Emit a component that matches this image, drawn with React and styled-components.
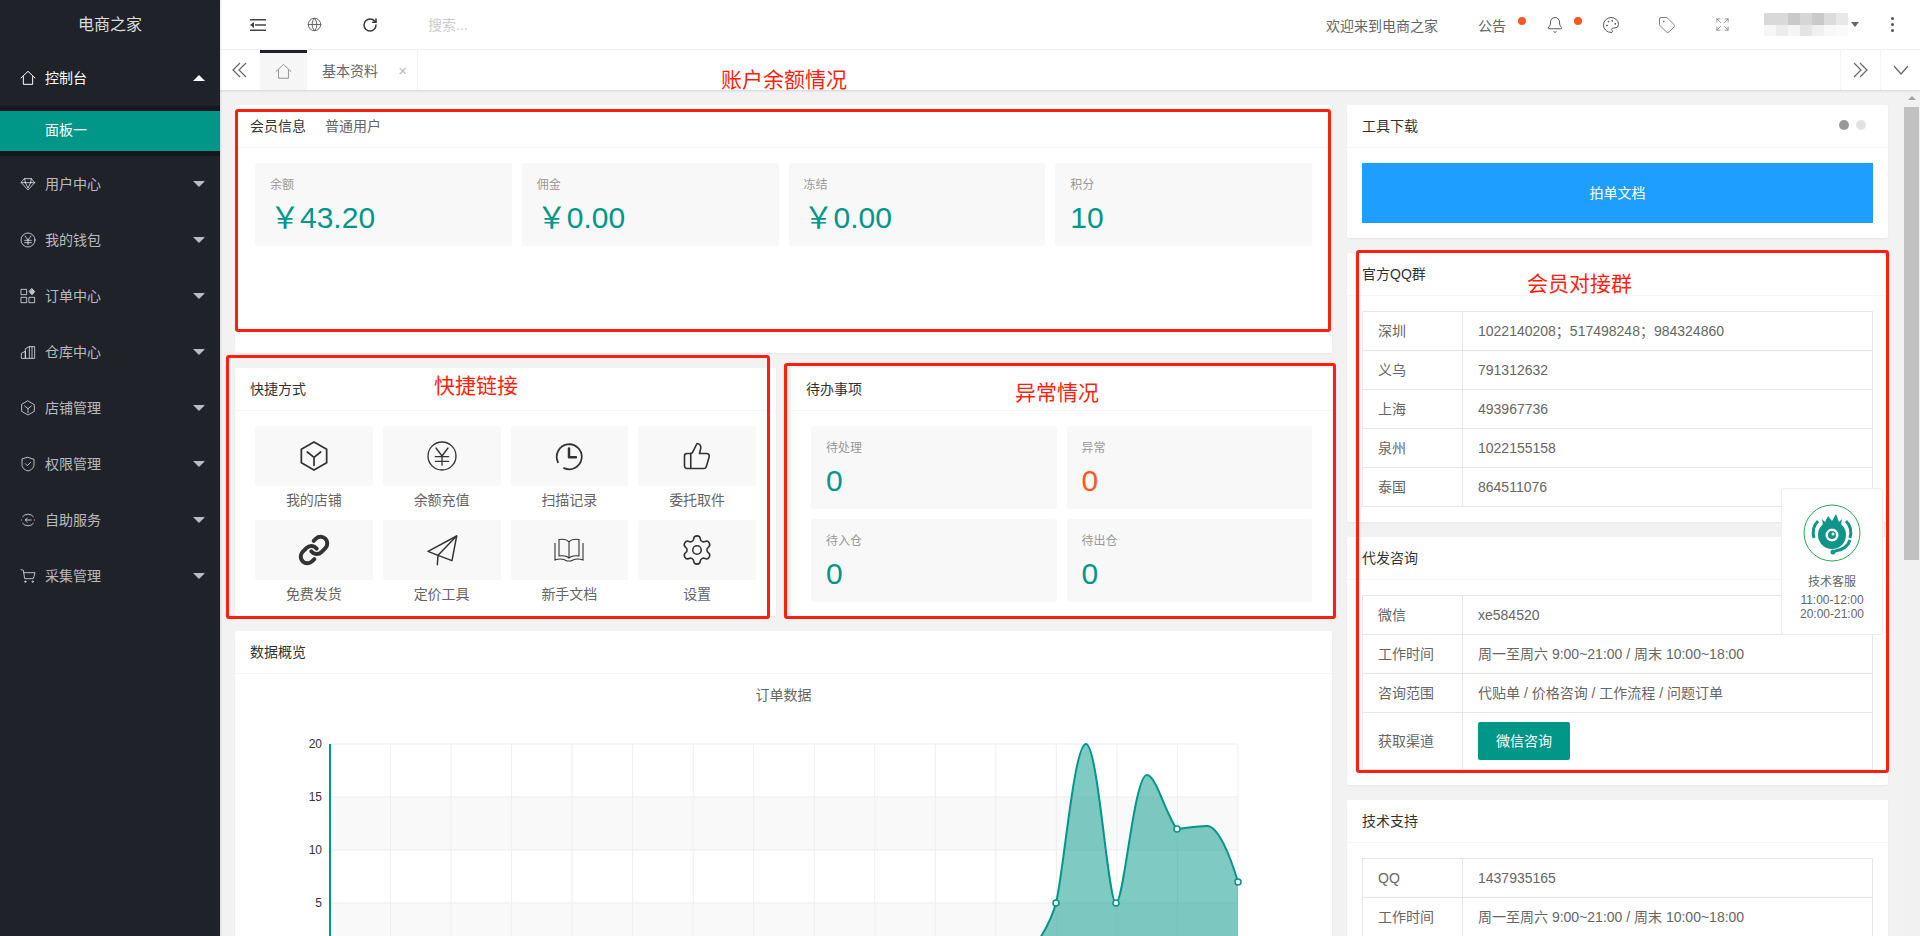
import React from 'react'
import styled, { createGlobalStyle } from 'styled-components'
import { Bell, Palette, Tag, Expand, Globe, RotateCw, ThumbsUp, Settings, Link as LinkIcon } from 'lucide-react'

const GlobalStyle = createGlobalStyle`
  * { box-sizing: border-box; }
  html, body { margin: 0; height: 100%; overflow: hidden; background: #f2f2f2; }
  body {
    font-family: "Liberation Sans", "Noto Sans CJK SC", sans-serif;
    font-size: 14px;
    color: #666;
  }
`

const Page = styled.div`
  position: relative;
  display: flex;
  width: 100%;
  height: 100vh;
  overflow: hidden;
`

const Sidebar = styled.aside`
  flex: 0 0 220px;
  background: #20222a;
  box-shadow: 1px 0 2px rgba(0, 0, 0, 0.1);
  z-index: 2;
`

const Logo = styled.div`
  height: 50px;
  line-height: 50px;
  text-align: center;
  font-size: 16px;
  color: rgba(255, 255, 255, 0.85);
`

const MenuItem = styled.div`
  display: flex;
  align-items: center;
  height: 56px;
  padding: 0 15px 0 20px;
  color: ${props => props.$active ? '#fff' : 'rgba(255, 255, 255, 0.7)'};

  & > span { margin-left: 9px; padding-bottom: 2px; flex: 1; }
`

const Caret = styled.i`
  width: 0;
  height: 0;
  border-left: 6px solid transparent;
  border-right: 6px solid transparent;
  border-top: ${props => props.$up ? '0' : '6px solid rgba(255, 255, 255, 0.7)'};
  border-bottom: ${props => props.$up ? '6px solid #fff' : '0'};
`

const SubMenu = styled.div`
  background: rgba(0, 0, 0, 0.3);
  padding: 5px 0;
`

const SubItem = styled.div`
  height: 40px;
  line-height: 38px;
  padding-left: 45px;
  color: #fff;
  background: #009688;
`

const Main = styled.div`
  flex: 1;
  min-width: 0;
  display: flex;
  flex-direction: column;
`

const TopBar = styled.header`
  display: flex;
  align-items: center;
  height: 50px;
  padding-left: 10px;
  background: #fff;
  border-bottom: 1px solid #f4f4f4;
`

const TopIcon = styled.div`
  position: relative;
  display: flex;
  align-items: center;
  justify-content: ${props => props.$left ? 'flex-start' : 'center'};
  width: ${props => props.$w || 56}px;
  height: 100%;
  flex: none;
  color: ${props => props.$color || '#555'};
`

const Search = styled.input`
  margin-left: 30px;
  width: 200px;
  border: 0;
  outline: 0;
  padding: 0;
  font: inherit;
  background: transparent;

  &::placeholder { color: #ccc; opacity: 1; }
`

const Spacer = styled.div`
  flex: 1;
`

const Dot = styled.i`
  position: absolute;
  top: 17px;
  left: ${props => props.$left}px;
  width: 8px;
  height: 8px;
  border-radius: 50%;
  background: #ff5722;
`

const Mosaic = styled.div`
  display: grid;
  grid-template-columns: repeat(7, 12px);
  grid-auto-rows: 11.5px;
  margin-left: 14px;
  width: 84px;
`

const MosaicCell = styled.i`
  background: ${props => props.$c};
`

const UserCaret = styled.i`
  width: 0;
  height: 0;
  margin: 0 5px 0 3px;
  border-left: 4px solid transparent;
  border-right: 4px solid transparent;
  border-top: 5px solid #666;
`

const MoreDots = styled.div`
  display: flex;
  flex-direction: column;
  gap: 3px;

  & > i { width: 3px; height: 3px; background: #555; border-radius: 50%; }
`

const TabBar = styled.div`
  position: relative;
  display: flex;
  height: 40px;
  background: #fff;
  box-shadow: 0 1px 2px rgba(0, 0, 0, 0.12);
  z-index: 1;
`

const TabArrow = styled.div`
  display: flex;
  align-items: center;
  justify-content: center;
  width: 40px;
  color: #666;
  border-left: ${props => props.$line ? '1px solid #f4f4f4' : '0'};
`

const HomeTab = styled.div`
  display: flex;
  align-items: center;
  justify-content: center;
  width: 47px;
  background: #f6f6f6;
  border-top: 3px solid #20222a;
  color: #777;
`

const Tab = styled.div`
  display: flex;
  align-items: center;
  justify-content: space-between;
  width: 111px;
  padding: 0 10px 0 15px;
  border-right: 1px solid #f4f4f4;
  color: #666;

  & > em { font-style: normal; font-size: 15px; color: #bbb; }
`

const BodyRow = styled.div`
  flex: 1;
  min-height: 0;
  display: flex;
`

const Content = styled.main`
  flex: 1;
  min-width: 0;
  overflow: hidden;
  padding: 15px;
`

const Rail = styled.div`
  flex: 0 0 17px;
  background: #f1f1f1;
  padding-top: 6px;
`

const RailArrow = styled.i`
  display: block;
  width: 0;
  height: 0;
  margin: 0 auto 7px;
  border-left: 4px solid transparent;
  border-right: 4px solid transparent;
  border-bottom: 4px solid #a3a3a3;
`

const RailThumb = styled.div`
  height: 453px;
  margin: 0 1px;
  background: #c1c1c1;
`

const Columns = styled.div`
  display: grid;
  grid-template-columns: 1097px 541px;
  gap: 15px;
  align-items: start;
`

const Stack = styled.div`
  display: flex;
  flex-direction: column;
  gap: 15px;
`

const HalfRow = styled.div`
  display: grid;
  grid-template-columns: 1fr 1fr;
  gap: 15px;
`

const Card = styled.section`
  background: #fff;
  border-radius: 2px;
  box-shadow: 0 1px 2px rgba(0, 0, 0, 0.05);
  height: ${props => props.$h ? props.$h + 'px' : 'auto'};
`

const CardHead = styled.div`
  display: flex;
  align-items: center;
  height: 43px;
  padding: 0 15px 2px;
  border-bottom: 1px solid #f6f6f6;
  color: #333;

  & > small { font-size: 14px; color: #666; margin-left: 19px; }
`

const CardBody = styled.div`
  padding: 15px ${props => props.$px || 15}px;
`

const Grid = styled.div`
  display: grid;
  grid-template-columns: repeat(${props => props.$cols}, 1fr);
  gap: 10px;
`

const Tile = styled.div`
  height: 83px;
  padding: 13px 15px 0;
  background: #f8f8f8;
  border-radius: 2px;
`

const TileLabel = styled.div`
  font-size: 12px;
  line-height: 18px;
  color: #999;
`

const TileValue = styled.div`
  margin-top: 6px;
  font-size: 30px;
  line-height: 36px;
  color: ${props => props.$warn ? '#ff5722' : '#009688'};
`

const Shortcut = styled.div`
  height: 84px;
  text-align: center;
  color: #666;
  line-height: 28px;
`

const ShortcutIcon = styled.div`
  display: flex;
  align-items: center;
  justify-content: center;
  height: 60px;
  background: #f8f8f8;
  border-radius: 2px;
  color: #333;
`

const CarouselDots = styled.div`
  display: flex;
  gap: 7px;
  margin-left: auto;
  margin-right: 7px;

  & > i { width: 10px; height: 10px; border-radius: 50%; background: #e2e2e2; }
  & > i:first-child { background: #999; }
`

const BlueButton = styled.div`
  height: 60px;
  line-height: 60px;
  text-align: center;
  color: #fff;
  background: #1e9fff;
`

const Table = styled.table`
  width: 100%;
  border-collapse: collapse;
  color: #666;

  & td {
    padding: 9px 15px;
    line-height: 20px;
    border: 1px solid #e6e6e6;
  }
  & td:first-child { width: 100px; }
`

const GreenButton = styled.div`
  display: block;
  width: 92px;
  height: 38px;
  line-height: 38px;
  text-align: center;
  border-radius: 2px;
  color: #fff;
  background: #009688;
`

const ChartTitle = styled.div`
  height: 42px;
  line-height: 42px;
  text-align: center;
  color: #666;
`

const ChartSvg = styled.svg`
  display: block;
  width: 1097px;
  height: 300px;

  & text { font-size: 12px; fill: #333; text-anchor: end; }
`

const Helper = styled.div`
  position: absolute;
  left: 1781px;
  top: 488px;
  width: 102px;
  height: 147px;
  padding-top: 15px;
  text-align: center;
  font-size: 12px;
  line-height: 14px;
  color: #666;
  background: #fff;
  border: 1px solid #eee;
  border-radius: 3px;
  z-index: 3;

  & > svg { display: block; margin: 0 auto 13px; }
  & > div { margin-bottom: 4px; }
`

const Mark = styled.div`
  position: absolute;
  left: ${props => props.$x}px;
  top: ${props => props.$y}px;
  width: ${props => props.$w}px;
  height: ${props => props.$h}px;
  border: 3px solid #ff1f0f;
  border-radius: 3px;
  z-index: 4;
  pointer-events: none;
`

const Note = styled.div`
  position: absolute;
  left: ${props => props.$x}px;
  top: ${props => props.$y}px;
  font-size: 21px;
  line-height: 28px;
  color: #ff1f0f;
  white-space: nowrap;
  z-index: 5;
`

const Line = ({ size = 16, sw = 1.5, children }) => (
  <svg width={size} height={size} viewBox='0 0 24 24' fill='none' stroke='currentColor' strokeWidth={sw} strokeLinecap='round' strokeLinejoin='round'>
    {children}
  </svg>
)

const HomeIcon = props => <Line {...props}><path d='M1.5 12 12 2l10.5 10' /><path d='M5 10v11.5h14V10' /></Line>
const GemIcon = props => <Line {...props}><path d='M7 4h10l5 6-10 11L2 10z' /><path d='M2 10h20M8 10l4 8 4-8M7 4l1 6M17 4l-1 6' /></Line>
const YenIcon = props => <Line {...props}><circle cx='12' cy='12' r='10.5' /><path d='M7.5 6 12 12l4.5-6M7 12.5h10M7 16h10M12 12v7' /></Line>
const AppsIcon = props => <Line {...props}><path d='M2 2h8v8H2zM2 14h8v8H2zM14 14h8v8h-8z' /><path d='m18 1 4 4.5-4 4.5-4-4.5z' fill='currentColor' /></Line>
const StoreIcon = props => <Line {...props}><path d='M2 21v-7l6-3v10zM8 21V7l6-3h8v17zM14 4v17M18 4v17' /></Line>
const BoxIcon = props => <Line {...props}><path d='M12 1.5 21.5 7v10L12 22.5 2.5 17V7z' /><path d='M7 9l5 4 5-4M12 13v6' /></Line>
const ShieldIcon = props => <Line {...props}><path d='M12 2 21 5v8c0 5-4 8-9 9.5C7 21 3 18 3 13V5z' /><path d='m8 11.5 3 3 5-5' /></Line>
const ServiceIcon = props => <Line {...props}><path d='M20 7a10 10 0 0 0-16 0M4 17a10 10 0 0 0 16 0M2 12h.5M21.5 12h.5' /><path d='M17 12H8m3-3-3 3 3 3' /></Line>
const CartIcon = props => <Line {...props}><path d='M1.5 2.5 5 3.5 7 16h13l2.5-9H6' /><circle cx='8' cy='20.5' r='1' /><circle cx='19' cy='20.5' r='1' /></Line>
const ClockIcon = props => <Line {...props}><path d='M8 21.7A10 10 0 1 0 3.2 17' /><path d='M12 6v7h5.5' strokeWidth='2' /></Line>
const PlaneIcon = props => <Line {...props}><path d='M1.5 13 23 1.5 19.5 20 9 16z' /><path d='M23 1.5 9 16l-.5 7 .5-7z' /></Line>
const BookIcon = () => (
  <svg width='30' height='24' viewBox='0 0 30 24' fill='none' stroke='currentColor' strokeWidth='1.100'>
    <path d='M15 4C13 1.500 9 1 5 1.500V18c4-.5 8 0 10 2 2-2 6-2.500 10-2V1.500C21 1 17 1.500 15 4zM15 4v16' />
    <path d='M1 5v17c4-1.500 9-1 12 1h4c3-2 8-2.500 12-1V5' />
  </svg>
)
const ShrinkIcon = () => (
  <svg width='18' height='14' viewBox='0 0 18 14'><path d='M1 1h16v1.500H1zM1 11.500h16V13H1zM6 6.200h11v1.500H6zM1 7l4-3v6z' fill='#444' /></svg>
)
const Chevrons = ({ right }) => (
  <svg width='16' height='16' viewBox='0 0 16 16' fill='none' stroke='currentColor' strokeWidth='1.200'>
    <path d={right ? 'M1 1l7 7-7 7M7 1l7 7-7 7' : 'M8 1 1 8l7 7M14 1 7 8l7 7'} />
  </svg>
)
const ChevronDown = () => (
  <svg width='16' height='16' viewBox='0 0 16 16' fill='none' stroke='currentColor' strokeWidth='1.200'><path d='M1 4l7 8 7-8' /></svg>
)

const RobotLogo = () => (
  <svg width='58' height='58' viewBox='0 0 58 58'>
    <circle cx='29' cy='29' r='28' fill='#fff' stroke='#22a94f' strokeWidth='1' />
    <path d='M19 15l3 3 3-6 4 5 4-7 3 8 3-3-1 6H20z' fill='#0f9488' />
    <circle cx='29' cy='31' r='14' fill='#0f9488' />
    <circle cx='29' cy='31' r='6.500' fill='#fff' />
    <circle cx='29' cy='31' r='4' fill='#0f9488' />
    <circle cx='30' cy='30' r='1.500' fill='#fff' />
    <path d='M11 34c-2-7 0-13 4-17M47 34c2-7 0-13-4-17M47 36c-2 7-8 10-15 11' fill='none' stroke='#0f9488' strokeWidth='3' />
    <circle cx='30' cy='48' r='2.500' fill='#0f9488' />
  </svg>
)

const menu = [
  ['用户中心', GemIcon],
  ['我的钱包', YenIcon],
  ['订单中心', AppsIcon],
  ['仓库中心', StoreIcon],
  ['店铺管理', BoxIcon],
  ['权限管理', ShieldIcon],
  ['自助服务', ServiceIcon],
  ['采集管理', CartIcon]
]

const mosaic = [
  '#d9d9d9', '#d9d9d9', '#c9c9c9', '#d6d6d6', '#c9c9c9', '#dcdcdc', '#e8e8e8',
  '#f6f6f6', '#ececec', '#f4f4f4', '#e4e4e4', '#f0f0f0', '#f8f8f8', '#fafafa'
]

const balances = [['余额', '￥43.20'], ['佣金', '￥0.00'], ['冻结', '￥0.00'], ['积分', '10']]

const shortcuts = [
  ['我的店铺', <BoxIcon size={32} sw={1.300} />],
  ['余额充值', <YenIcon size={32} sw={1} />],
  ['扫描记录', <ClockIcon size={30} sw={1.400} />],
  ['委托取件', <ThumbsUp size={30} strokeWidth={1.300} />],
  ['免费发货', <LinkIcon size={32} strokeWidth={3} />],
  ['定价工具', <PlaneIcon size={32} sw={1.100} />],
  ['新手文档', <BookIcon />],
  ['设置', <Settings size={34} strokeWidth={1.100} />]
]

const todos = [['待处理', 0], ['异常', 0, true], ['待入仓', 0], ['待出仓', 0]]

const qqGroups = [
  ['深圳', '1022140208；517498248；984324860'],
  ['义乌', '791312632'],
  ['上海', '493967736'],
  ['泉州', '1022155158'],
  ['泰国', '864511076']
]

const xLines = Array.from({ length: 16 }, (_, i) => 330 + i * 60.53)
const yTicks = [[20, 744], [15, 797], [10, 850], [5, 903]]
const curve = 'C1036 946 1050 925 1056 903C1064 870 1074 744 1086 744C1098 744 1108 903 1116 903C1124 903 1134 775 1147 775C1156 775 1166 815 1177 829C1187 828 1197 826 1207 826C1218 826 1230 855 1238 882'
const dots = [[1056, 903], [1116, 903], [1177, 829], [1238, 882]]

const OrderChart = () => (
  <ChartSvg viewBox='235 716 1097 300'>
    <rect x='330' y='797' width='908' height='53' fill='#f9f9f9' />
    <rect x='330' y='903' width='908' height='53' fill='#f9f9f9' />
    {xLines.map(x => <line key={x} x1={x} x2={x} y1='744' y2='956' stroke='#eee' />)}
    {yTicks.map(([v, y]) => (
      <g key={v}>
        <line x1='330' x2='1238' y1={y} y2={y} stroke='#eee' />
        <text x='322' y={y + 4}>{v}</text>
      </g>
    ))}
    <path d={`M1026 956${curve}V956z`} fill='#009688' fillOpacity='0.5' />
    <path d={`M330 956H1026${curve}`} fill='none' stroke='#009688' strokeWidth='2' />
    <line x1='330' x2='330' y1='744' y2='956' stroke='#009688' strokeWidth='2' />
    {dots.map(([x, y]) => <circle key={x} cx={x} cy={y} r='3' fill='#fff' stroke='#009688' strokeWidth='1.500' />)}
  </ChartSvg>
)

const App = () => (
  <Page>
    <GlobalStyle />
    <Sidebar>
      <Logo>电商之家</Logo>
      <MenuItem $active>
        <HomeIcon size={16} sw={1.500} />
        <span>控制台</span>
        <Caret $up />
      </MenuItem>
      <SubMenu>
        <SubItem>面板一</SubItem>
      </SubMenu>
      {menu.map(([label, Icon]) => (
        <MenuItem key={label}>
          <Icon size={16} sw={1.500} />
          <span>{label}</span>
          <Caret />
        </MenuItem>
      ))}
    </Sidebar>

    <Main>
      <TopBar>
        <TopIcon><ShrinkIcon /></TopIcon>
        <TopIcon $color='#666'><Globe size={15} strokeWidth={1.600} /></TopIcon>
        <TopIcon $color='#333'><RotateCw size={16} strokeWidth={2.200} /></TopIcon>
        <Search placeholder='搜索...' />
        <Spacer />
        <TopIcon $w={152} $left $color='#666'>欢迎来到电商之家</TopIcon>
        <TopIcon $w={49} $left $color='#666'>公告<Dot $left={40} /></TopIcon>
        <TopIcon $color='#444'><Bell size={18} strokeWidth={1.200} /><Dot $left={47} /></TopIcon>
        <TopIcon $color='#555'><Palette size={18} strokeWidth={1.300} /></TopIcon>
        <TopIcon $w={55} $color='#666'><Tag size={18} strokeWidth={1.100} /></TopIcon>
        <TopIcon $color='#777'><Expand size={15} strokeWidth={1.200} /></TopIcon>
        <Mosaic>{mosaic.map((c, i) => <MosaicCell key={i} $c={c} />)}</Mosaic>
        <UserCaret />
        <TopIcon $left={false}><MoreDots><i /><i /><i /></MoreDots></TopIcon>
      </TopBar>

      <TabBar>
        <TabArrow><Chevrons /></TabArrow>
        <HomeTab><HomeIcon size={17} sw={1.100} /></HomeTab>
        <Tab>基本资料<em>×</em></Tab>
        <Spacer />
        <TabArrow $line><Chevrons right /></TabArrow>
        <TabArrow $line><ChevronDown /></TabArrow>
      </TabBar>

      <BodyRow>
        <Content>
          <Columns>
            <Stack>
              <Card $h={248}>
                <CardHead>会员信息<small>普通用户</small></CardHead>
                <CardBody $px={20}>
                  <Grid $cols={4}>
                    {balances.map(([label, value]) => (
                      <Tile key={label}>
                        <TileLabel>{label}</TileLabel>
                        <TileValue>{value}</TileValue>
                      </Tile>
                    ))}
                  </Grid>
                </CardBody>
              </Card>

              <HalfRow>
                <Card $h={248}>
                  <CardHead>快捷方式</CardHead>
                  <CardBody $px={20}>
                    <Grid $cols={4}>
                      {shortcuts.map(([label, icon]) => (
                        <Shortcut key={label}>
                          <ShortcutIcon>{icon}</ShortcutIcon>
                          {label}
                        </Shortcut>
                      ))}
                    </Grid>
                  </CardBody>
                </Card>
                <Card $h={248}>
                  <CardHead>待办事项</CardHead>
                  <CardBody $px={20}>
                    <Grid $cols={2}>
                      {todos.map(([label, value, warn]) => (
                        <Tile key={label}>
                          <TileLabel>{label}</TileLabel>
                          <TileValue $warn={warn}>{value}</TileValue>
                        </Tile>
                      ))}
                    </Grid>
                  </CardBody>
                </Card>
              </HalfRow>

              <Card>
                <CardHead>数据概览</CardHead>
                <ChartTitle>订单数据</ChartTitle>
                <OrderChart />
              </Card>
            </Stack>

            <Stack>
              <Card>
                <CardHead>工具下载<CarouselDots><i /><i /></CarouselDots></CardHead>
                <CardBody>
                  <BlueButton>拍单文档</BlueButton>
                </CardBody>
              </Card>

              <Card>
                <CardHead>官方QQ群</CardHead>
                <CardBody>
                  <Table>
                    <tbody>
                      {qqGroups.map(([city, qq]) => (
                        <tr key={city}><td>{city}</td><td>{qq}</td></tr>
                      ))}
                    </tbody>
                  </Table>
                </CardBody>
              </Card>

              <Card>
                <CardHead>代发咨询</CardHead>
                <CardBody>
                  <Table>
                    <tbody>
                      <tr><td>微信</td><td>xe584520</td></tr>
                      <tr><td>工作时间</td><td>周一至周六 9:00~21:00 / 周末 10:00~18:00</td></tr>
                      <tr><td>咨询范围</td><td>代贴单 / 价格咨询 / 工作流程 / 问题订单</td></tr>
                      <tr><td>获取渠道</td><td><GreenButton>微信咨询</GreenButton></td></tr>
                    </tbody>
                  </Table>
                </CardBody>
              </Card>

              <Card>
                <CardHead>技术支持</CardHead>
                <CardBody>
                  <Table>
                    <tbody>
                      <tr><td>QQ</td><td>1437935165</td></tr>
                      <tr><td>工作时间</td><td>周一至周六 9:00~21:00 / 周末 10:00~18:00</td></tr>
                    </tbody>
                  </Table>
                </CardBody>
              </Card>
            </Stack>
          </Columns>
        </Content>
        <Rail>
          <RailArrow />
          <RailThumb />
        </Rail>
      </BodyRow>
    </Main>

    <Helper>
      <RobotLogo />
      <div>技术客服</div>
      11:00-12:00<br />20:00-21:00
    </Helper>

    <Mark $x={235} $y={109} $w={1096} $h={223} />
    <Mark $x={226} $y={355} $w={544} $h={264} />
    <Mark $x={784} $y={363} $w={552} $h={256} />
    <Mark $x={1356} $y={250} $w={533} $h={523} />
    <Note $x={721} $y={66}>账户余额情况</Note>
    <Note $x={434} $y={372}>快捷链接</Note>
    <Note $x={1015} $y={379}>异常情况</Note>
    <Note $x={1527} $y={270}>会员对接群</Note>
  </Page>
)

export default App
